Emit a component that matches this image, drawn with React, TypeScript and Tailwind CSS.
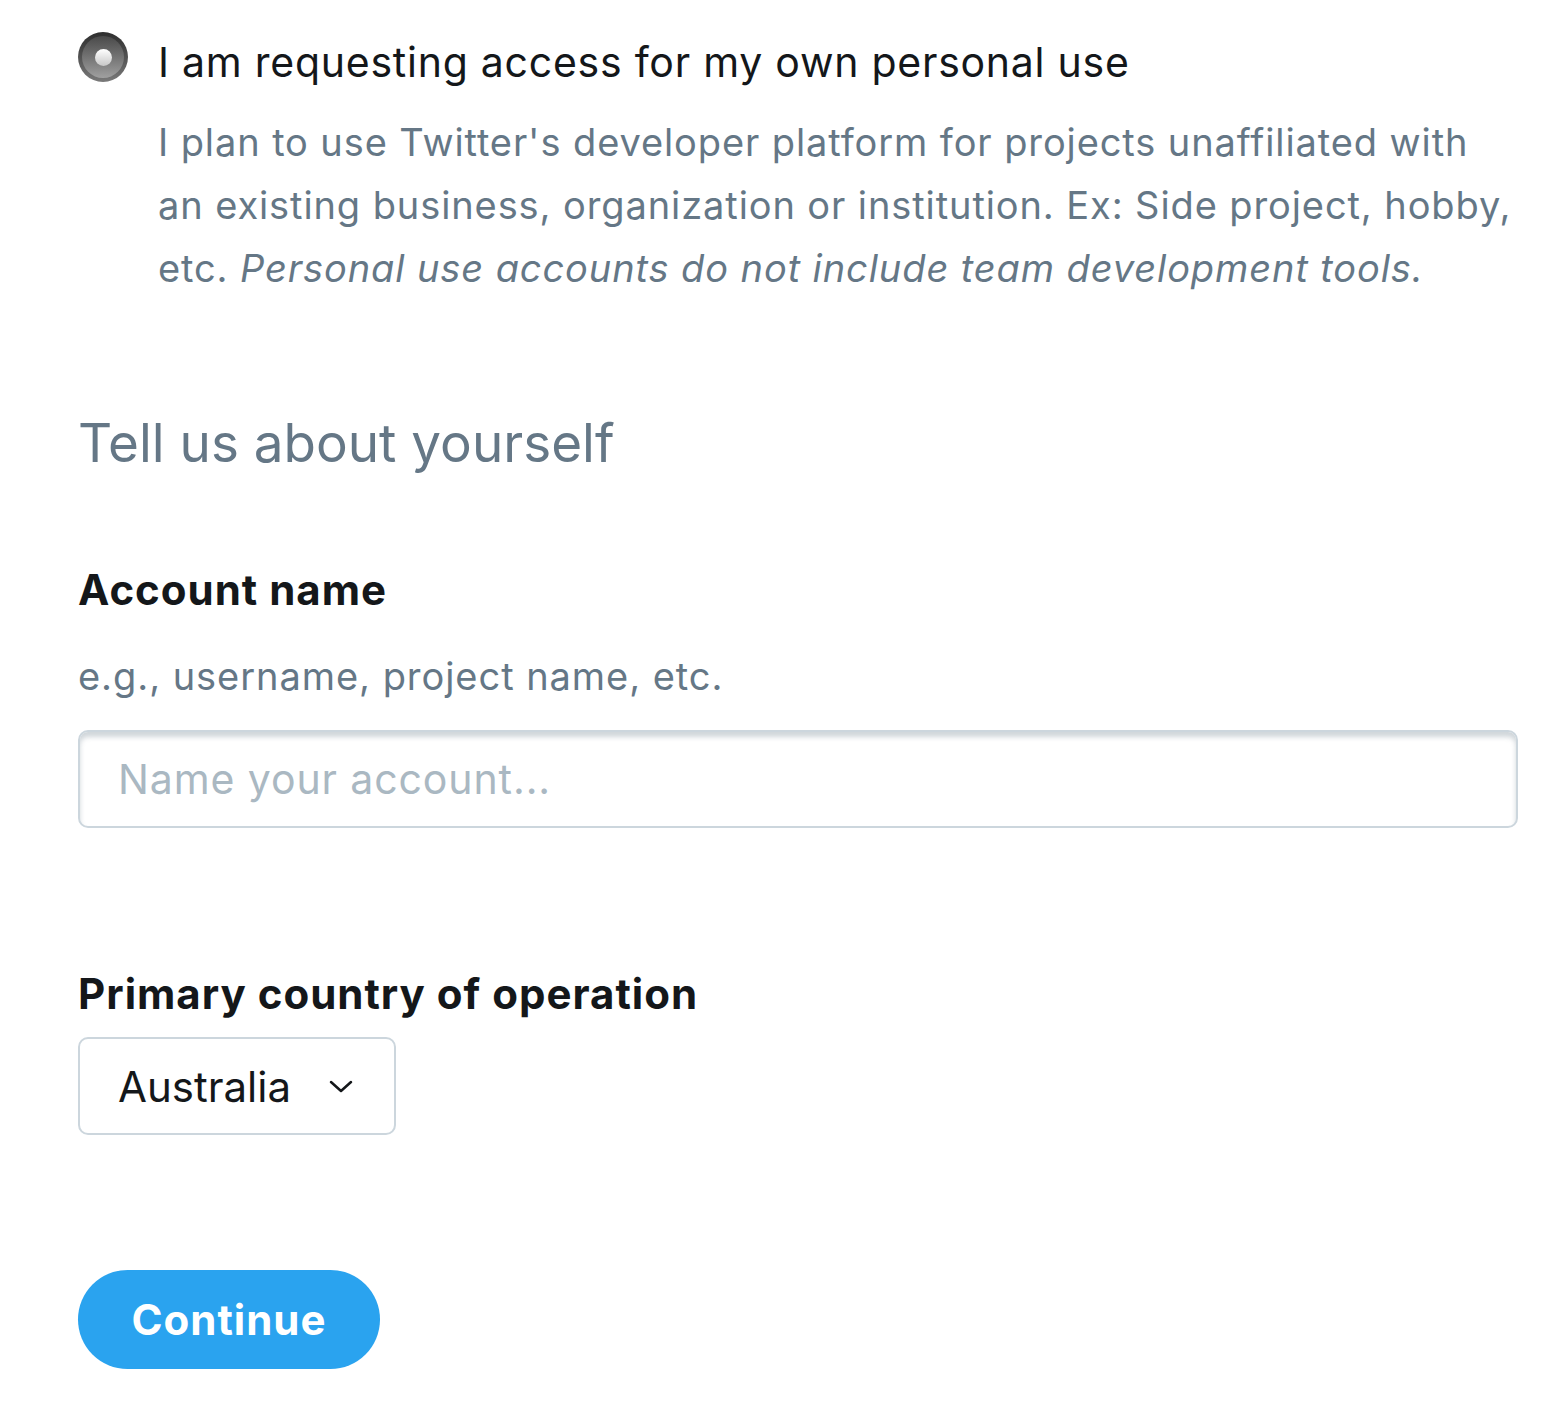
import { useState } from 'react';

export default function App() {
  const [name, setName] = useState('');
  const [country, setCountry] = useState('Australia');

  return (
    <div className="min-h-screen bg-white font-['Inter','Noto_Sans',sans-serif] text-[#14171a]">
      <div className="pl-[78px] pr-[38px] pt-[32px] pb-[44px]">
        {/* 사용 목적 */}
        <div className="flex items-start">
          <div className="mt-[0px] w-[50px] h-[50px] rounded-full bg-gradient-to-b from-[#2e2e2e] to-[#7a7a7a] flex items-center justify-center shrink-0">
            <div className="w-[42px] h-[42px] rounded-full bg-gradient-to-b from-[#4a4a4a] to-[#a0a0a0] flex items-center justify-center">
              <div className="w-[17px] h-[17px] rounded-full bg-gradient-to-b from-white to-[#c8c8c8]" />
            </div>
          </div>
          <div className="ml-[30px]">
            <p className="text-[41px] leading-[62px] -mt-[1px] tracking-[0.75px]">I am requesting access for my own personal use</p>
            <p className="mt-[18px] text-[38px] leading-[63px] tracking-[0.9px] text-[#657786] whitespace-nowrap">
              I plan to use Twitter's developer platform for projects unaffiliated with
              <br />
              an existing business, organization or institution. Ex: Side project, hobby,
              <br />
              etc. <em>Personal use accounts do not include team development tools.</em>
            </p>
          </div>
        </div>

        <h1 className="mt-[108px] text-[53px] leading-[70px] text-[#657786]">Tell us about yourself</h1>

        {/* 계정 이름 */}
        <h2 className="mt-[87px] text-[42px] leading-[50px] tracking-[1px] font-bold">Account name</h2>
        <p className="mt-[36px] text-[38px] leading-[50px] tracking-[0.95px] text-[#657786]">e.g., username, project name, etc.</p>
        <input
          value={name}
          onChange={(e) => setName(e.target.value)}
          placeholder="Name your account..."
          className="mt-[29px] block w-full h-[98px] px-[38px] rounded-[10px] border-2 border-[#ccd6dd] shadow-[inset_0_5px_5px_rgba(101,119,134,0.3)] text-[41px] tracking-[0.9px] outline-none placeholder:text-[#aab8c2]"
        />

        {/* 국가 */}
        <h2 className="mt-[141px] text-[42px] leading-[50px] tracking-[1px] font-bold">Primary country of operation</h2>
        <div className="mt-[18px] w-[318px] h-[98px] rounded-[10px] border-2 border-[#ccd6dd] flex items-center pl-[38px] pr-[40px] justify-between">
          <span className="text-[42px]">{country}</span>
          <svg width="26" height="16" viewBox="0 0 26 16" fill="none" stroke="#14171a" strokeWidth="2.5" strokeLinecap="round" strokeLinejoin="round" onClick={() => setCountry('Australia')}>
            <path d="M3 4 L13 13 L23 4" />
          </svg>
        </div>

        <button className="mt-[135px] w-[302px] h-[99px] rounded-full bg-[#2aa3ef] text-white text-[42px] tracking-[1px] font-bold">
          Continue
        </button>
      </div>
    </div>
  );
}
